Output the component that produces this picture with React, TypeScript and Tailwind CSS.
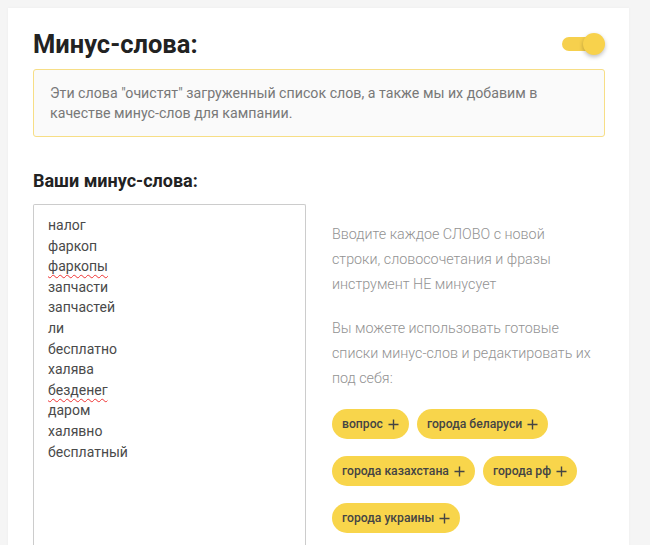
import React, { useState } from 'react';

const words = [
  'налог',
  'фаркоп',
  'фаркопы',
  'запчасти',
  'запчастей',
  'ли',
  'бесплатно',
  'халява',
  'безденег',
  'даром',
  'халявно',
  'бесплатный',
];

// words the browser marks as misspelled
const misspelled = ['фаркопы', 'безденег'];

const presets = [
  ['вопрос', 'города беларуси'],
  ['города казахстана', 'города рф'],
  ['города украины'],
];

const PlusIcon: React.FC = () => (
  <svg width="11" height="11" viewBox="0 0 11 11" className="ml-[5px]">
    <path d="M5.5 0.5v10M0.5 5.5h10" stroke="#444" strokeWidth="1.4" fill="none" />
  </svg>
);

const App: React.FC = () => {
  const [enabled, setEnabled] = useState(true);

  return (
    <div className="min-h-screen bg-[#f5f5f5] pt-2 pl-2" style={{ fontFamily: 'Roboto, "Noto Sans", sans-serif' }}>
      <div className="w-[621px] min-h-[537px] bg-white pl-[25px] pr-[24px] pt-[20px] shadow-[0_0_3px_rgba(0,0,0,0.04)]">
        {/* Header */}
        <div className="flex items-center justify-between h-[32px]">
          <h1 className="text-[25.5px] font-bold text-[#222] leading-[30px]">Минус-слова:</h1>
          <button
            type="button"
            onClick={() => setEnabled(!enabled)}
            className="relative w-[43px] h-[24px] flex items-center"
          >
            <span className="w-[37px] h-[14px] rounded-full bg-[#f6d04d]" />
            <span className="absolute right-0 top-px w-[22px] h-[22px] rounded-full bg-[#f8d24c] shadow-[0_2px_4px_rgba(0,0,0,0.25)]" />
          </button>
        </div>

        {/* Info box */}
        <div className="mt-[9px] border border-[#f7de86] rounded-[3px] bg-[#fafafa] pl-[16px] pr-4 py-[13px] text-[14.2px] leading-[20px] text-[#787878]">
          Эти слова "очистят" загруженный список слов, а также мы их добавим в
          <br />
          качестве минус-слов для кампании.
        </div>

        {/* Minus words */}
        <h2 className="mt-[33px] text-[18px] font-bold text-[#222] leading-[22px]">Ваши минус-слова:</h2>

        <div className="mt-[12px] flex gap-[26px]">
          <div className="w-[273px] h-[345px] border border-[#cccccc] rounded-t-[2px] border-b-0 pl-[14px] pt-[10px] text-[14px] leading-[20.6px] text-[#4a4a4a]">
            {words.map((w) => (
              <div key={w}>
                {misspelled.includes(w) ? (
                  <span className="underline decoration-wavy decoration-[#e33] decoration-1 underline-offset-[3px]">{w}</span>
                ) : (
                  w
                )}
              </div>
            ))}
          </div>

          <div className="pt-[18px] text-[14.3px] font-light leading-[25px] text-[#929292]">
            <p>
              Вводите каждое СЛОВО с новой
              <br />
              строки, словосочетания и фразы
              <br />
              инструмент НЕ минусует
            </p>
            <p className="mt-[19px]">
              Вы можете использовать готовые
              <br />
              списки минус-слов и редактировать их
              <br />
              под себя:
            </p>

            <div className="mt-[18px] flex flex-col gap-[17px]">
              {presets.map((row, i) => (
                <div key={i} className="flex gap-[8px]">
                  {row.map((tag) => (
                    <button
                      key={tag}
                      type="button"
                      className="h-[30px] pl-[10px] pr-[10px] rounded-full bg-[#f8d54b] flex items-center text-[12.2px] font-medium text-[#444] leading-none"
                    >
                      {tag}
                      <PlusIcon />
                    </button>
                  ))}
                </div>
              ))}
            </div>
          </div>
        </div>
      </div>
    </div>
  );
};

export default App;
